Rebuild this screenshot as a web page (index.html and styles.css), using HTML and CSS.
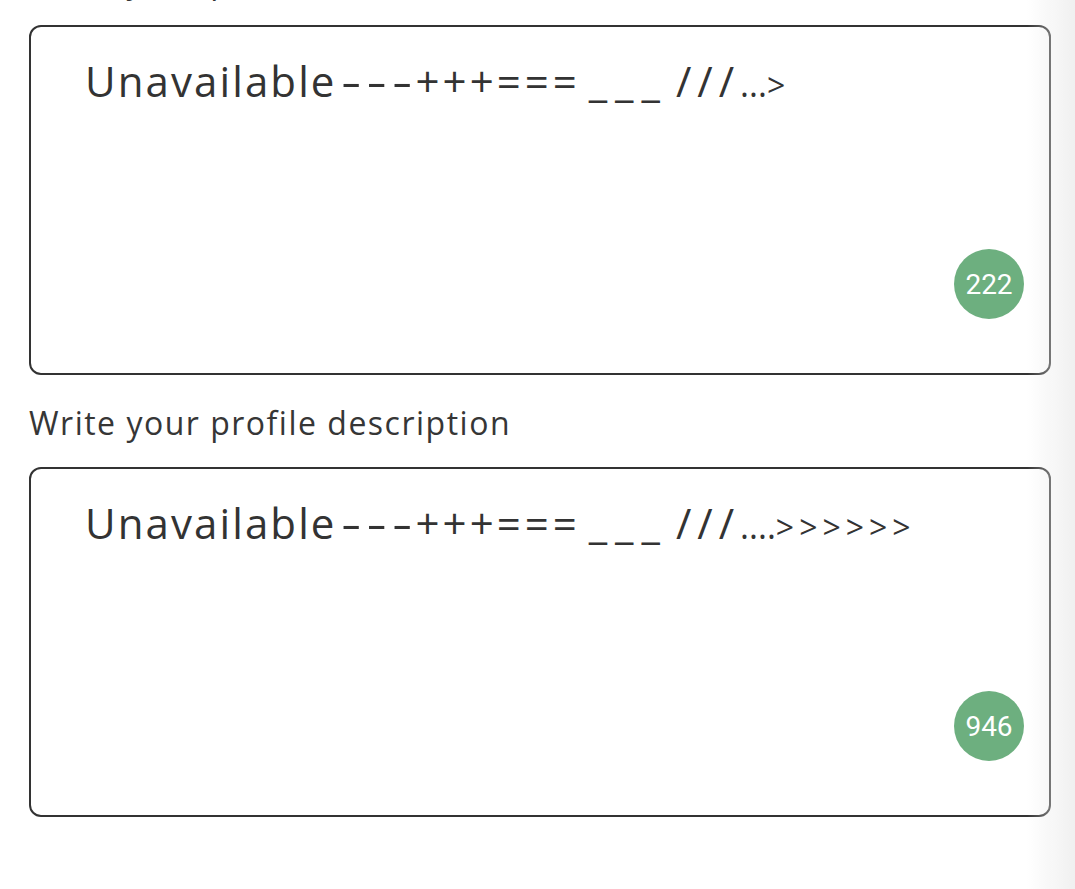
FILE: index.html
```html
<!DOCTYPE html>
<html lang="en">
<head>
<meta charset="utf-8">
<title>Profile</title>
<link rel="stylesheet" href="styles.css">
</head>
<body>
<main class="form">
  <section class="field">
    <label class="field-label">Write your profile headline</label>
    <div class="box">
      <div class="box-text">Unavailable<span class="s-dash">---</span><span class="s-plus">+++</span><span class="s-eq">===</span><span class="s-us">___</span><span class="s-sl">///</span><span class="s-dot">...</span><span class="s-gt">&gt;</span></div>
      <span class="count">222</span>
    </div>
  </section>
  <section class="field">
    <label class="field-label">Write your profile description</label>
    <div class="box">
      <div class="box-text">Unavailable<span class="s-dash">---</span><span class="s-plus">+++</span><span class="s-eq">===</span><span class="s-us">___</span><span class="s-sl">///</span><span class="s-dot">....</span><span class="s-gt">&gt;&gt;&gt;&gt;&gt;&gt;</span></div>
      <span class="count">946</span>
    </div>
  </section>
</main>
<div class="edge-shade"></div>
</body>
</html>
```
FILE: styles.css
```css
html, body {
  margin: 0;
  padding: 0;
  background: #ffffff;
  overflow: hidden;
}
body {
  width: 1075px;
  height: 889px;
  font-family: "Open Sans", "Noto Sans", sans-serif;
  color: #333333;
}
.form {
  margin-top: -43px;
  padding: 0 24px 0 29px;
  display: flex;
  flex-direction: column;
  gap: 24px;
}
.field {
  display: flex;
  flex-direction: column;
}
.field-label {
  display: block;
  font-size: 32px;
  line-height: 48px;
  height: 48px;
  margin-bottom: 20px;
  letter-spacing: 1.5px;
  color: #363636;
}
.box {
  position: relative;
  border: 2px solid #333333;
  border-radius: 12px;
  padding: 22px 54px 0 54px;
  box-sizing: content-box;
  height: 324px;
}
.box-text {
  font-size: 42px;
  line-height: 63px;
  letter-spacing: 2.1px;
  color: #333333;
  white-space: nowrap;
}
.s-dash {
  display: inline-block;
  letter-spacing: 3.5px;
  margin-left: 4px;
  margin-right: 24px;
  transform: scaleX(1.5);
  transform-origin: left center;
}
.s-plus { letter-spacing: 3px; }
.s-eq { letter-spacing: 4px; }
.s-us { letter-spacing: 8px; margin-left: 8px; }
.s-sl { letter-spacing: 6px; margin-left: 8px; }
.s-dot { letter-spacing: 0; font-size: 34px; }
.s-gt { font-size: 32px; letter-spacing: 5px; }
.count {
  position: absolute;
  right: 25px;
  bottom: 54px;
  width: 70px;
  height: 70px;
  border-radius: 50%;
  background: #6daf7f;
  color: #ffffff;
  font-family: Roboto, "Noto Sans", sans-serif;
  font-size: 28px;
  display: flex;
  align-items: center;
  justify-content: center;
}
.edge-shade {
  position: fixed;
  top: 0;
  right: 0;
  width: 48px;
  height: 100%;
  background: linear-gradient(to right, rgba(235,235,235,0), rgba(235,235,235,0.75));
  pointer-events: none;
}
```
